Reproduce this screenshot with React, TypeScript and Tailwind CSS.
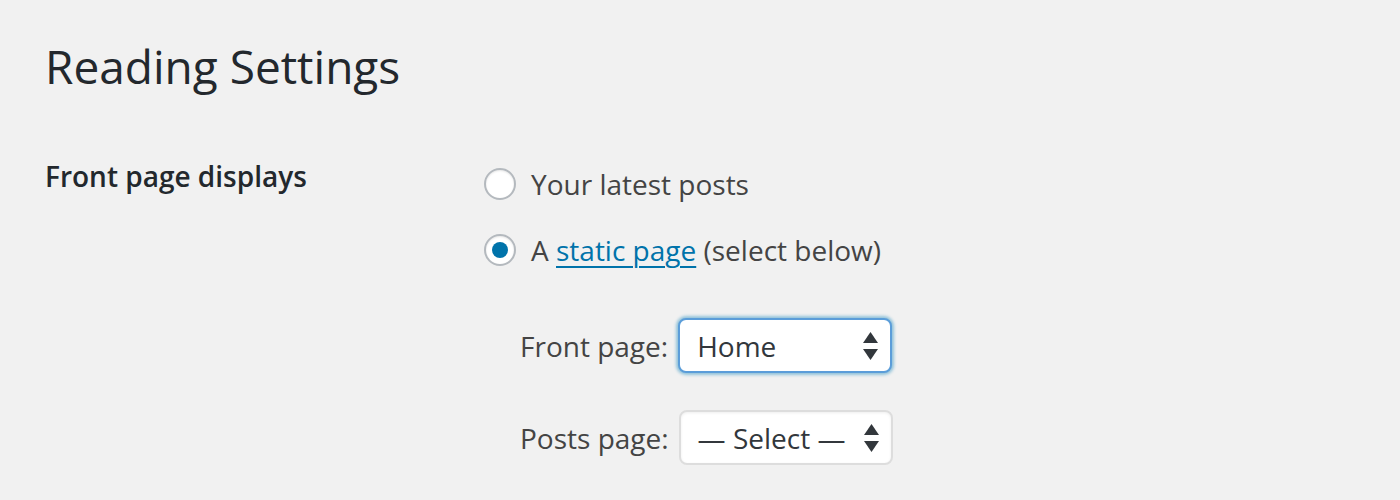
import React from 'react';

const font = { fontFamily: '"Open Sans", "Liberation Sans", sans-serif' };

const Arrows = () => (
  <svg width="15" height="28" viewBox="0 0 15 28" className="text-[#32373c]">
    <path d="M7.5 0 L15 11 L0 11 Z" fill="currentColor" />
    <path d="M7.5 28 L15 17 L0 17 Z" fill="currentColor" />
  </svg>
);

interface SelectBoxProps {
  value: string;
  focused?: boolean;
}

const SelectBox: React.FC<SelectBoxProps> = ({ value, focused = false }) => (
  <div
    className={`flex items-center justify-between w-[214px] h-[55px] pl-[17px] pr-[12px] bg-white rounded-[8px] border-2 text-[28px] text-[#32373c] ${
      focused
        ? 'border-[#5b9dd9] shadow-[0_0_3px_2px_rgba(30,140,190,0.45)]'
        : 'border-[#ddd] shadow-[inset_0_1px_3px_rgba(0,0,0,0.07)]'
    }`}
  >
    <span>{value}</span>
    <Arrows />
  </div>
);

const Radio: React.FC<{ checked?: boolean }> = ({ checked = false }) => (
  <span className="flex items-center justify-center w-[32px] h-[32px] rounded-full border-2 border-[#b4b9be] bg-white shadow-[inset_0_1px_2px_rgba(0,0,0,0.1)]">
    {checked && <span className="w-[16px] h-[16px] rounded-full bg-[#0073aa]" />}
  </span>
);

export default function App() {
  return (
    <div className="w-[1400px] h-[500px] bg-[#f1f1f1] overflow-hidden pl-[45px]" style={font}>
      <h1 className="pt-[36px] text-[46px] leading-[60px] font-normal text-[#23282d]">Reading Settings</h1>

      <div className="flex mt-[60px]">
        <div className="w-[439px] text-[28px] font-semibold text-[#23282d] leading-[40px]">
          Front page displays
        </div>

        <div className="flex flex-col text-[28px] text-[#444] leading-[40px]">
          <label className="flex items-center gap-[15px] h-[40px] mt-[8px]">
            <Radio />
            <span>Your latest posts</span>
          </label>
          <label className="flex items-center gap-[15px] h-[40px] mt-[26px]">
            <Radio checked />
            <span>
              A{' '}
              <a href="#" className="text-[#0073aa] underline underline-offset-[5px] decoration-[2px]">
                static page
              </a>{' '}
              (select below)
            </span>
          </label>

          <div className="flex flex-col gap-[37px] mt-[48px] pl-[36px]">
            <div className="flex items-center gap-[10px]">
              <span>Front page:</span>
              <SelectBox value="Home" focused />
            </div>
            <div className="flex items-center gap-[10px]">
              <span>Posts page:</span>
              <SelectBox value="— Select —" />
            </div>
          </div>
        </div>
      </div>
    </div>
  );
}
